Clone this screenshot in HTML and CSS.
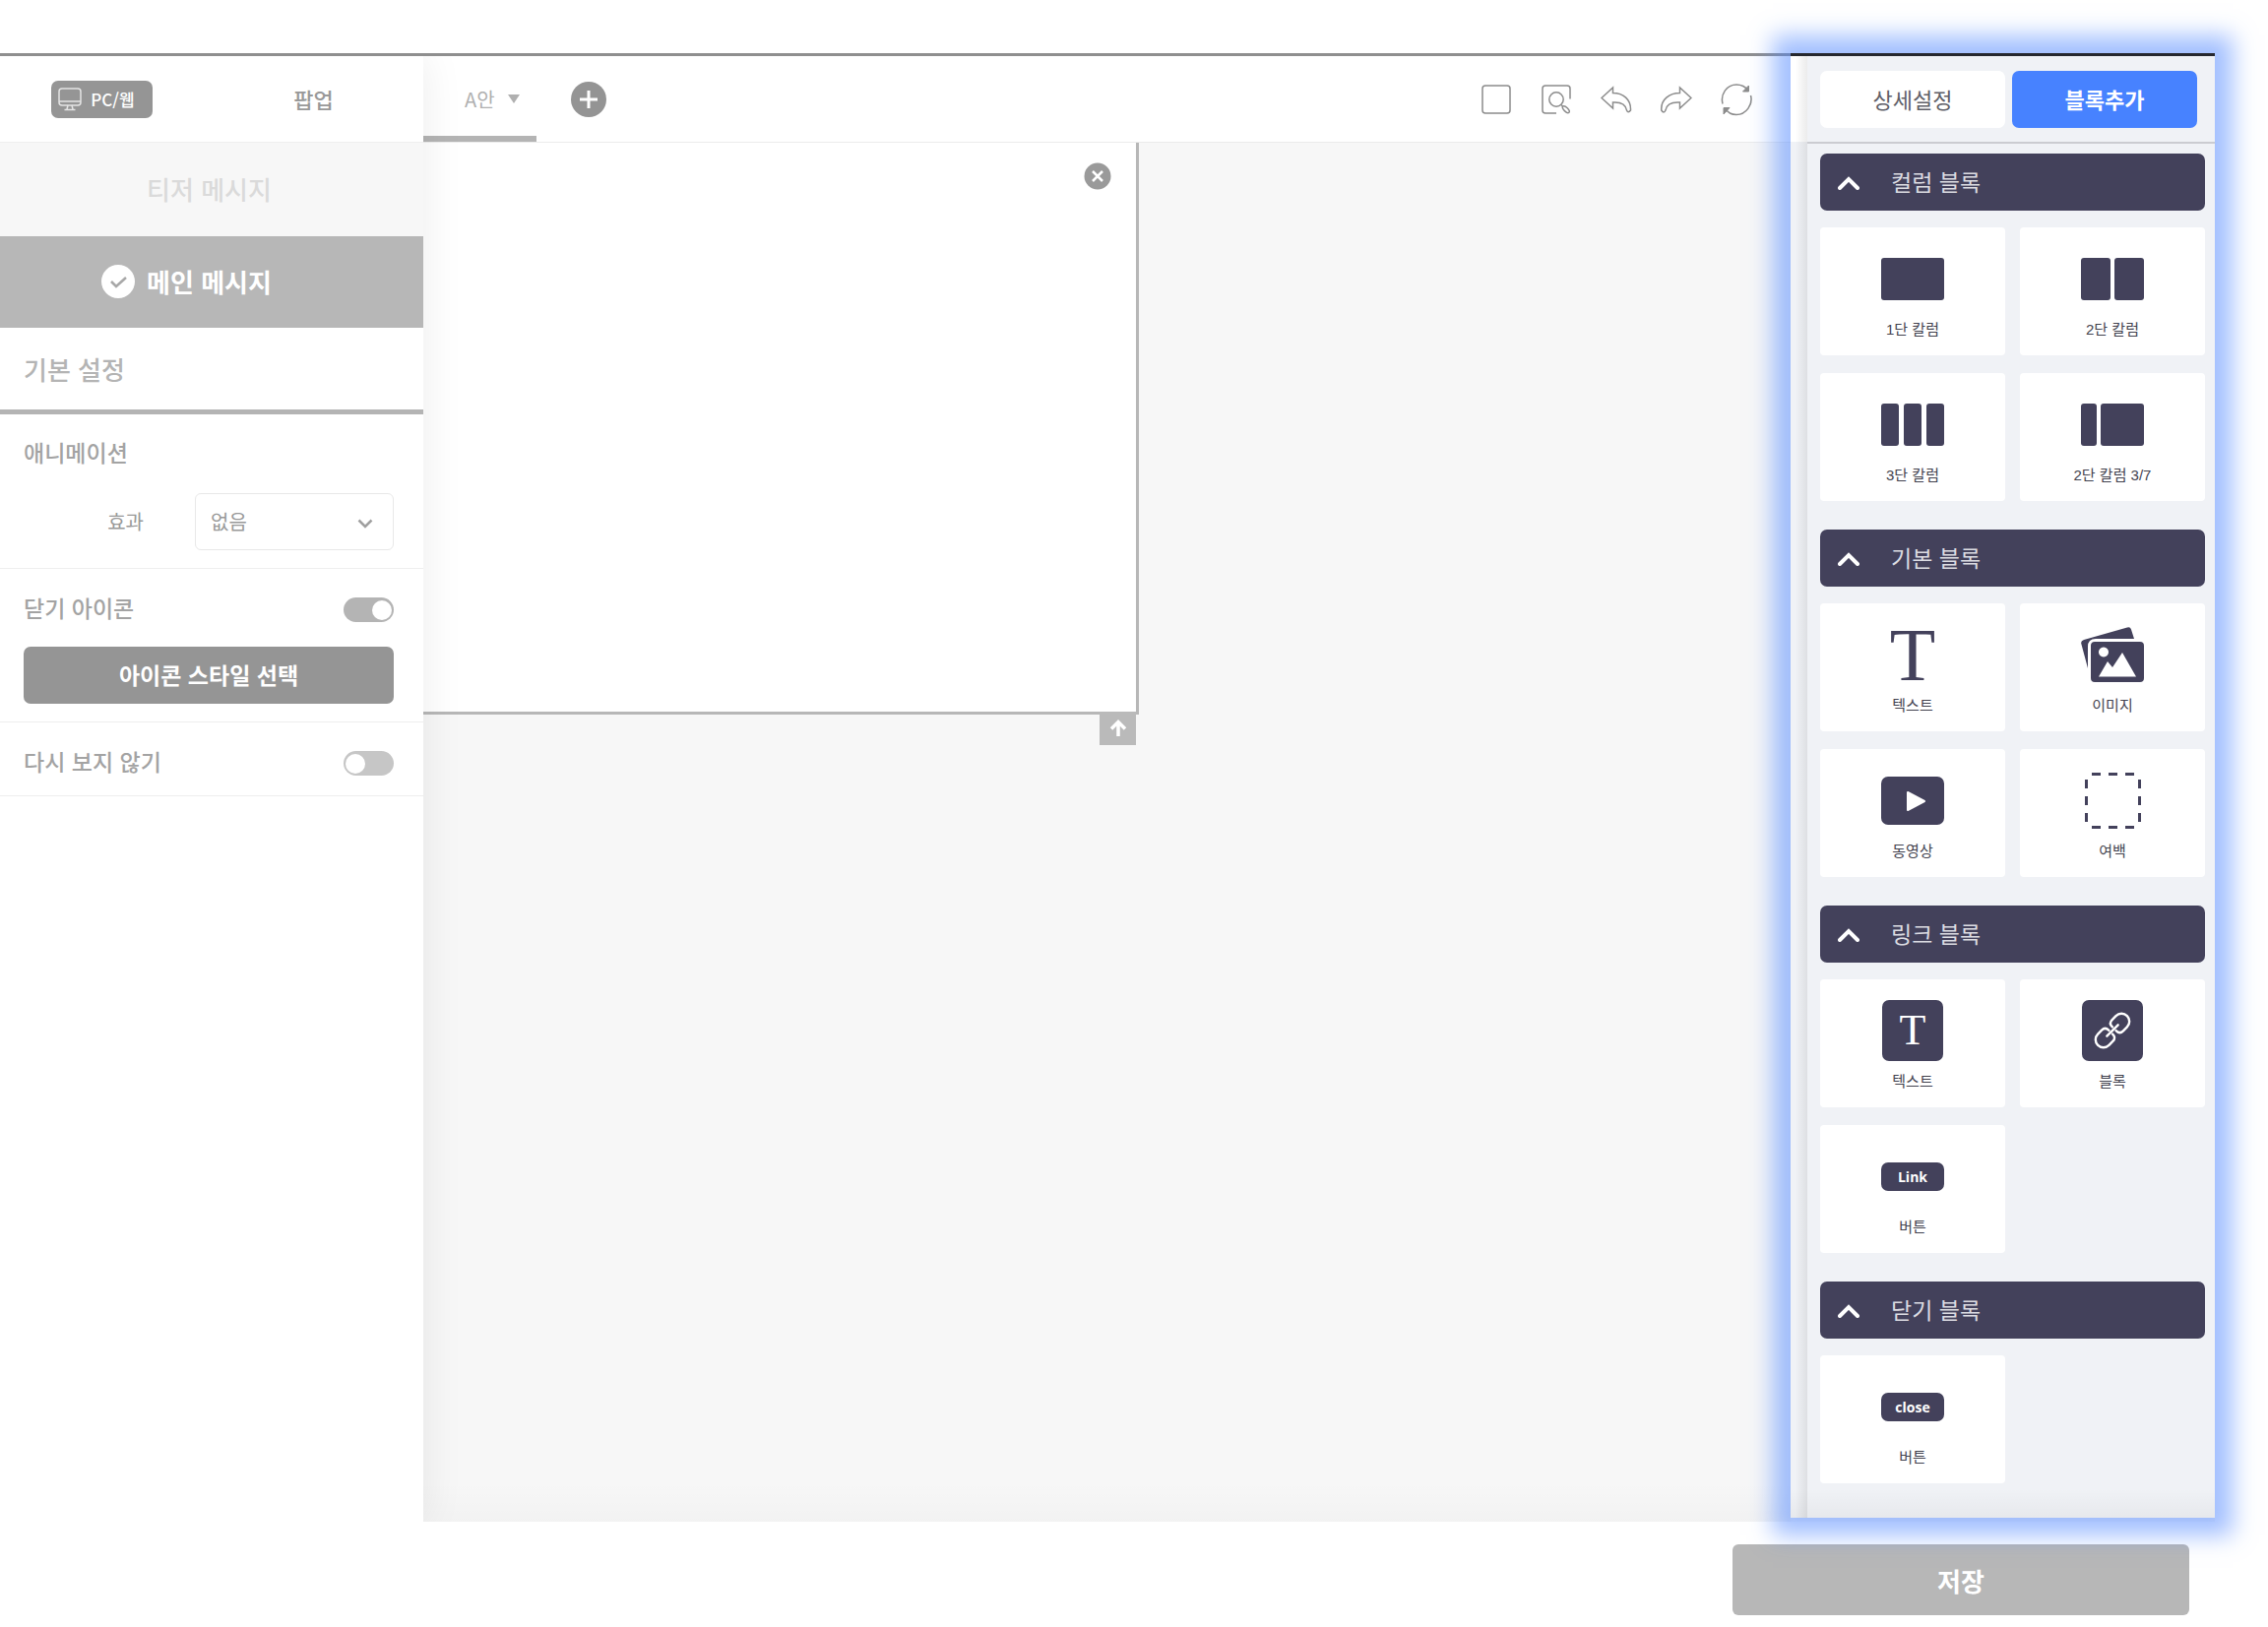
FILE: index.html
```html
<!DOCTYPE html>
<html lang="ko">
<head>
<meta charset="utf-8">
<title>팝업 편집기</title>
<link rel="stylesheet" href="styles.css">
</head>
<body>
<div class="app">
  <div class="workspace">
    <aside class="settings">
      <div class="settings-head">
        <button class="device" type="button">
          <svg width="24" height="24" viewBox="0 0 24 24" fill="none" stroke="#e4e4e4" stroke-width="1.5"><rect x="1" y="1" width="22" height="17" rx="3"/><path d="M1 14h22M10 18l-1 4M14 18l1 4M6.500 22.500h11"/></svg>
          <span>PC/웹</span>
        </button>
        <span class="kind">팝업</span>
      </div>
      <button class="step" type="button"><span class="step-name">티저 메시지</span></button>
      <button class="step step-active" type="button">
        <svg class="step-check" width="34" height="34" viewBox="0 0 34 34"><circle cx="17" cy="17" r="17" fill="#fff"/><path d="M10 17l5 5 10-9" fill="none" stroke="#a8a8a8" stroke-width="2.600"/></svg>
        <span class="step-name">메인 메시지</span>
      </button>
      <h2 class="settings-title">기본 설정</h2>
      <section class="group">
        <h3 class="group-title">애니메이션</h3>
        <div class="field">
          <label class="field-label" for="effect">효과</label>
          <div class="select-wrap">
            <select class="select" id="effect"><option>없음</option></select>
            <svg class="select-arrow" width="16" height="10" viewBox="0 0 16 10" fill="none" stroke="#a0a0a0" stroke-width="2.500"><path d="M1.500 1.500L8 8l6.500-6.500"/></svg>
          </div>
        </div>
      </section>
      <section class="group">
        <div class="switch-row">
          <label class="group-title" for="close-icon">닫기 아이콘</label>
          <input class="switch" id="close-icon" type="checkbox" checked>
        </div>
        <button class="style-button" type="button">아이콘 스타일 선택</button>
      </section>
      <section class="group">
        <div class="switch-row">
          <label class="group-title" for="hide-again">다시 보지 않기</label>
          <input class="switch" id="hide-again" type="checkbox">
        </div>
      </section>
    </aside>

    <main class="editor">
      <header class="toolbar">
        <button class="variant" type="button">A안
          <svg width="12" height="9" viewBox="0 0 12 9"><path d="M0 0h12L6 9z" fill="#b0b0b0"/></svg>
        </button>
        <button class="plain add" type="button" aria-label="추가">
          <svg width="36" height="36" viewBox="0 0 36 36"><circle cx="18" cy="18" r="18" fill="#949494"/><path d="M18 9v18M9 18h18" stroke="#fff" stroke-width="3"/></svg>
        </button>
        <div class="tools">
          <button class="plain" type="button" aria-label="영역"><svg width="32" height="34" viewBox="0 0 32 34"><rect x="2" y="3" width="28" height="28" rx="3"/></svg></button>
          <button class="plain" type="button" aria-label="미리보기"><svg width="32" height="34" viewBox="0 0 32 34"><path d="M16 31H5q-3 0-3-3V6q0-3 3-3h22q3 0 3 3v10.500"/><circle cx="16" cy="17" r="7.200"/><path d="M21 22.500l2 2"/><ellipse cx="25.800" cy="27.200" rx="2" ry="4.400" transform="rotate(-45 25.800 27.200)"/></svg></button>
          <button class="plain" type="button" aria-label="실행 취소"><svg width="32" height="34" viewBox="0 0 32 34"><path d="M1 15.500L12.500 5v5.500C23 10.500 31 17 30.500 28q-2.500 3.500-4 0C25.500 22 20 19.500 12.500 20v6z"/></svg></button>
          <button class="plain" type="button" aria-label="다시 실행"><svg width="32" height="34" viewBox="0 0 32 34"><path d="M31 15.500L19.500 5v5.500C9 10.500 0 17 .800 28q2.500 4 4.200 0c1-6 7-8.500 14.500-8v6z"/></svg></button>
          <button class="plain" type="button" aria-label="초기화"><svg width="32" height="34" viewBox="0 0 32 34"><path d="M2 21.500C-.500 12 6 2 16 2c5 0 9.500 2.500 12 6"/><path d="M30.500 13C33 22 26 32.500 16 32.500c-5 0-9.500-3-12-6.500"/><path d="M28.500 3v6h-6zM3 32v-6.500h6z" fill="#8c8c8c" stroke-width="1"/></svg></button>
        </div>
      </header>
      <div class="canvas">
        <div class="popup">
          <button class="plain popup-close" type="button" aria-label="닫기"><svg width="28" height="28" viewBox="0 0 28 28"><circle cx="14" cy="14" r="13.500" fill="#9a9a9a"/><path d="M9 9l10 10M19 9L9 19" stroke="#fff" stroke-width="2.500"/></svg></button>
          <button class="plain popup-up" type="button" aria-label="위로"><svg width="18" height="18" viewBox="0 0 18 18" fill="none" stroke="#fff" stroke-width="3.500"><path d="M9 17V3M2 9.500L9 2.500l7 7"/></svg></button>
        </div>
      </div>
    </main>

    <aside class="blocks">
      <div class="block-tabs">
        <button class="block-tab" type="button">상세설정</button>
        <button class="block-tab block-tab-active" type="button">블록추가</button>
      </div>
      <div class="block-list">
        <section class="block-group">
          <button class="bar" type="button"><svg width="22" height="14" viewBox="0 0 22 14"><path d="M2 12l9-9 9 9"/></svg>컬럼 블록</button>
          <div class="tiles">
            <button class="tile" type="button"><span class="tile-icon"><svg width="64" height="43" viewBox="0 0 64 43"><rect width="64" height="43" rx="3"/></svg></span>1단 칼럼</button>
            <button class="tile" type="button"><span class="tile-icon"><svg width="64" height="43" viewBox="0 0 64 43"><rect width="30" height="43" rx="3"/><rect x="34" width="30" height="43" rx="3"/></svg></span>2단 칼럼</button>
            <button class="tile" type="button"><span class="tile-icon"><svg width="64" height="43" viewBox="0 0 64 43"><rect width="18" height="43" rx="3"/><rect x="23" width="18" height="43" rx="3"/><rect x="46" width="18" height="43" rx="3"/></svg></span>3단 칼럼</button>
            <button class="tile" type="button"><span class="tile-icon"><svg width="64" height="43" viewBox="0 0 64 43"><rect width="16" height="43" rx="3"/><rect x="20" width="44" height="43" rx="3"/></svg></span>2단 칼럼 3/7</button>
          </div>
        </section>
        <section class="block-group">
          <button class="bar" type="button"><svg width="22" height="14" viewBox="0 0 22 14"><path d="M2 12l9-9 9 9"/></svg>기본 블록</button>
          <div class="tiles">
            <button class="tile" type="button"><span class="tile-icon letter">T</span>텍스트</button>
            <button class="tile" type="button"><span class="tile-icon"><svg width="64" height="56" viewBox="0 0 64 56"><path d="M3 13L47 .500q3-1 4 2l3 9.500H15q-8 0-8 8v22L.300 17q-.800-3 2.700-4z"/><path fill-rule="evenodd" d="M14 15h46q4 0 4 4v33q0 4-4 4H14q-4 0-4-4V19q0-4 4-4zm9 5.500a5 5 0 1 0 .010 0zM18 50.500h38L42 26 32 41l-5-6z"/></svg></span>이미지</button>
            <button class="tile" type="button"><span class="tile-icon"><svg width="64" height="49" viewBox="0 0 64 49"><rect width="64" height="49" rx="7"/><path d="M27 16v18l17-9z" fill="#fff" stroke="#fff" stroke-width="2" stroke-linejoin="round"/></svg></span>동영상</button>
            <button class="tile" type="button"><span class="tile-icon"><svg width="57" height="57" viewBox="0 0 57 57"><path fill="none" stroke="#43415b" stroke-width="3" d="M7 1.500h43M7 55.500h43M1.500 7v43M55.500 7v43" stroke-dasharray="9 8"/></svg></span>여백</button>
          </div>
        </section>
        <section class="block-group">
          <button class="bar" type="button"><svg width="22" height="14" viewBox="0 0 22 14"><path d="M2 12l9-9 9 9"/></svg>링크 블록</button>
          <div class="tiles">
            <button class="tile" type="button"><span class="tile-icon"><span class="letter-box">T</span></span>텍스트</button>
            <button class="tile" type="button"><span class="tile-icon"><svg width="62" height="62" viewBox="0 0 62 62"><rect width="62" height="62" rx="7"/><g fill="none" stroke="#fff" stroke-width="2.400" stroke-linecap="round" transform="rotate(-45 31 31)"><path d="M33.500 28.500v-.500q0-5 5-5H44a8 8 0 0 1 0 16h-5.500q-5 0-5-5v-.500"/><path d="M28.500 33.500v.500q0 5-5 5H18a8 8 0 0 1 0-16h5.500q5 0 5 5v.500"/><path d="M23 31h16"/></g></svg></span>블록</button>
            <button class="tile" type="button"><span class="tile-icon"><span class="pill">Link</span></span>버튼</button>
          </div>
        </section>
        <section class="block-group">
          <button class="bar" type="button"><svg width="22" height="14" viewBox="0 0 22 14"><path d="M2 12l9-9 9 9"/></svg>닫기 블록</button>
          <div class="tiles">
            <button class="tile" type="button"><span class="tile-icon"><span class="pill">close</span></span>버튼</button>
          </div>
        </section>
      </div>
    </aside>
  </div>
  <footer class="footer"><button class="save" type="button">저장</button></footer>
</div>
</body>
</html>
```

FILE: styles.css
```css
* { box-sizing: border-box; }

body {
  margin: 0;
  background: #fff;
  color: #999;
  font-family: "Noto Sans CJK KR", sans-serif;
}

button {
  margin: 0;
  padding: 0;
  border: 0;
  background: none;
  color: inherit;
  font: inherit;
}

h2, h3 { margin: 0; font-weight: 500; }
svg { display: block; flex: none; }

.app { padding: 54px 54px 12px 0; }

.workspace {
  display: grid;
  grid-template-columns: 430px 1fr 431px;
  background: linear-gradient(#8f8f8f, #8f8f8f) top / 100% 3px no-repeat, #f7f7f7;
}

/* left settings panel */
.settings {
  position: relative;
  z-index: 1;
  margin-top: 3px;
  background: #fff;
  box-shadow: 0 0 40px rgba(0, 0, 0, 0.08);
  clip-path: inset(0 -50px 0 0);
}

.settings-head {
  display: grid;
  grid-template-columns: 207px 1fr;
  place-items: center;
  height: 88px;
  border-bottom: 1px solid #efefef;
}

.device {
  display: flex;
  align-items: center;
  gap: 9px;
  height: 38px;
  padding: 0 18px 0 7px;
  border-radius: 7px;
  background: #959595;
  color: #fff;
  font-size: 17px;
  font-weight: 500;
}

.kind { padding-bottom: 2px; font-size: 22px; font-weight: 500; }

.step {
  display: grid;
  grid-template-columns: 1fr auto 1fr;
  align-items: center;
  gap: 12px;
  width: 100%;
  height: 95px;
  padding: 0 5px 2px 0;
  background: #f7f7f7;
  color: #dadada;
  font-size: 26px;
  font-weight: 500;
}

.step-active {
  height: 93px;
  background: #b7b7b7;
  color: #fff;
  font-weight: 700;
}

.step-check { justify-self: end; }
.step-name { grid-column: 2; }

.settings-title {
  height: 88px;
  padding-left: 24px;
  border-bottom: 5px solid #b4b4b4;
  color: #b4b4b4;
  font-size: 26px;
  line-height: 83px;
}

.group {
  padding: 21px 30px 18px 24px;
  border-bottom: 1px solid #eee;
}

.group-title {
  color: #a3a3a3;
  font-size: 23px;
  font-weight: 500;
  line-height: 34px;
}

.field {
  display: flex;
  align-items: center;
  gap: 52px;
  margin-top: 25px;
}

.field-label {
  width: 122px;
  padding-bottom: 2px;
  font-size: 20px;
  text-align: right;
}

.select-wrap { position: relative; flex: 1; }

.select {
  display: block;
  width: 100%;
  height: 58px;
  padding: 0 15px 2px;
  border: 1px solid #e8e8e8;
  border-radius: 6px;
  appearance: none;
  background: #fff;
  color: #999;
  font: 400 20px "Noto Sans CJK KR", sans-serif;
}

.select-arrow {
  position: absolute;
  top: 26px;
  right: 21px;
  pointer-events: none;
}

.switch-row {
  display: flex;
  align-items: center;
  justify-content: space-between;
  height: 35px;
}

.switch {
  display: flex;
  align-items: center;
  width: 51px;
  height: 25px;
  margin: 6px 0 0;
  padding: 0 2px;
  border-radius: 13px;
  appearance: none;
  background: #c6c6c6;
}

.switch::before {
  width: 20px;
  height: 20px;
  border-radius: 50%;
  background: #fff;
  content: "";
}

.switch:checked { justify-content: flex-end; background: #b4b4b4; }

.style-button {
  width: 100%;
  height: 58px;
  margin-top: 23px;
  padding-bottom: 2px;
  border-radius: 7px;
  background: #959595;
  color: #fff;
  font-size: 23px;
  font-weight: 700;
}

/* centre editor */
.editor {
  display: flex;
  flex-direction: column;
  margin-top: 3px;
}

.toolbar {
  display: flex;
  align-items: center;
  height: 88px;
  padding-right: 39px;
  border-bottom: 1px solid #ebebeb;
  background: #fff;
}

.variant {
  display: flex;
  align-items: center;
  gap: 13px;
  align-self: stretch;
  width: 115px;
  padding: 6px 0 0 42px;
  border-bottom: 6px solid #b4b4b4;
  color: #b0b0b0;
  font-size: 20px;
}

.add { margin-left: 35px; }

.tools {
  display: flex;
  gap: 29px;
  margin-left: auto;
}

.tools svg { fill: none; stroke: #8c8c8c; stroke-width: 1.5; }

.canvas {
  flex: 1;
  background: linear-gradient(transparent, rgba(0, 0, 0, 0.02)) bottom / 100% 40px no-repeat;
}

.popup {
  position: relative;
  width: 727px;
  height: 581px;
  border: solid #b7b7b7;
  border-width: 0 3px 3px 0;
  background: #fff;
}

.popup-close { position: absolute; top: 20px; right: 25px; }

.popup-up {
  position: absolute;
  top: 100%;
  right: 0;
  display: grid;
  place-items: center;
  width: 37px;
  height: 34px;
  background: #bababa;
}

/* right block palette */
.blocks {
  position: relative;
  z-index: 2;
  margin-bottom: 4px;
  padding-left: 17px;
  border-top: 3px solid #26282f;
  background:
    linear-gradient(transparent, rgba(0, 0, 0, 0.04)) bottom / 100% 30px no-repeat,
    linear-gradient(90deg, transparent, rgba(0, 0, 0, 0.08)) 5px 0 / 12px 100% no-repeat,
    linear-gradient(#fff, #fff) top left / 17px 87px no-repeat,
    #f0f2f6;
  box-shadow: 0 0 22px 18px rgba(71, 130, 255, 0.5);
}

.block-tabs {
  display: grid;
  grid-template-columns: 1fr 1fr;
  gap: 7px;
  height: 89px;
  padding: 15px 18px 14px 13px;
  border-bottom: 2px solid #cbccd1;
}

.block-tab {
  padding-bottom: 3px;
  border-radius: 7px;
  background: #fff;
  color: #5f5f68;
  font-size: 22px;
  font-weight: 400;
}

.block-tab-active {
  background: #4782ff;
  color: #fff;
  font-weight: 700;
}

.block-list {
  display: flex;
  flex-direction: column;
  gap: 29px;
  padding: 10px 10px 35px 13px;
}

.bar {
  display: flex;
  align-items: center;
  gap: 32px;
  width: 100%;
  height: 58px;
  margin-bottom: 17px;
  padding: 0 0 2px 18px;
  border-radius: 7px;
  background: #43415b;
  color: #dcdce2;
  font-size: 23px;
  font-weight: 400;
}

.bar svg { margin-top: 3px; fill: none; stroke: #fff; stroke-width: 4; stroke-linecap: round; }

.tiles {
  display: grid;
  grid-template-columns: 1fr 1fr;
  gap: 18px 15px;
}

.tile {
  display: flex;
  flex-direction: column;
  align-items: center;
  gap: 10px;
  height: 130px;
  padding-top: 20px;
  border-radius: 4px;
  background: #fff;
  color: #43434f;
  font-family: "Liberation Sans", "Noto Sans CJK KR", sans-serif;
  font-size: 15px;
  line-height: 20px;
}

.tile-icon {
  display: grid;
  place-items: center;
  height: 64px;
}

.tile-icon svg { fill: #43415b; }

.letter {
  color: #43415b;
  font: 76px/64px "Liberation Serif", serif;
}

.letter-box {
  width: 62px;
  height: 62px;
  border-radius: 7px;
  background: #43415b;
  color: #fff;
  font: 44px/62px "Liberation Serif", serif;
}

.pill {
  width: 64px;
  height: 29px;
  border-radius: 7px;
  background: #43415b;
  color: #fff;
  font: 700 14px/29px "Open Sans", sans-serif;
}

/* footer */
.footer {
  display: flex;
  justify-content: flex-end;
  padding: 23px 26px 0;
}

.save {
  width: 464px;
  height: 72px;
  border-radius: 6px;
  background: #b7b7b7;
  color: #fff;
  font-size: 26px;
  font-weight: 700;
}
```
